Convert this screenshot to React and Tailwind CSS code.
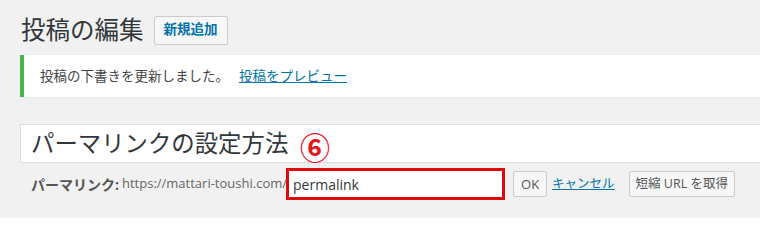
import React from "react";

const jp = { fontFamily: '"Open Sans", "Noto Sans CJK JP", sans-serif' };

const App = () => {
  return (
    <div
      className="w-[760px] h-[218px] bg-[#f1f1f1] text-[#23282d] overflow-hidden"
      style={jp}
    >
      <div className="pl-[20px] pt-[14px]">
        <div className="flex items-center gap-[10px]">
          <h1 className="text-[24.5px] leading-[32px] font-normal text-[#32373c] pl-px">
            投稿の編集
          </h1>
          <button className="h-[29px] px-[9px] border border-[#ccc] bg-[#f7f7f7] rounded-[2px] text-[13.5px] font-bold text-[#0073aa] leading-none">
            新規追加
          </button>
        </div>

        <div className="mt-[9px] h-[42px] flex items-center bg-white border-l-[4px] border-[#46b450] pl-[16px] shadow-[0_1px_1px_rgba(0,0,0,0.04)]">
          <span className="text-[13.5px] text-[#444]">投稿の下書きを更新しました。</span>
          <a className="ml-[10px] text-[13.5px] text-[#0073aa] underline">
            投稿をプレビュー
          </a>
        </div>

        <div className="mt-[27px] h-[39px] flex items-center bg-white border border-[#ddd] border-r-0 pl-[10px]">
          <span className="text-[23.4px] text-[#32373c] leading-none">
            パーマリンクの設定方法
          </span>
        </div>

        <div className="relative flex items-center h-[42px] pl-[11px] text-[13px] text-[#666]">
          <span className="absolute left-[280px] -top-[30px] text-[30px] leading-none text-[#e8141c] font-bold">
            ⑥
          </span>
          <strong className="font-bold text-[14px] text-[#555]">パーマリンク:</strong>
          <span className="ml-[3px]">https://mattari-toushi.com/</span>
          <div className="ml-[-1px] w-[219px] h-[32px] border-[3px] border-[#e00a0a] bg-white flex items-center pl-[4px] text-[14px] text-[#32373c]">
            permalink
          </div>
          <button className="ml-[8px] h-[26px] px-[7px] border border-[#ccc] bg-[#f7f7f7] rounded-[2px] text-[13px] text-[#555] leading-none">
            OK
          </button>
          <a className="ml-[5px] text-[12.5px] text-[#0073aa] underline">キャンセル</a>
          <button className="ml-[14px] h-[26px] px-[6px] border border-[#ccc] bg-[#f7f7f7] rounded-[2px] text-[12.5px] text-[#555] leading-none">
            短縮 URL を取得
          </button>
        </div>
      </div>
    </div>
  );
};

export default App;
